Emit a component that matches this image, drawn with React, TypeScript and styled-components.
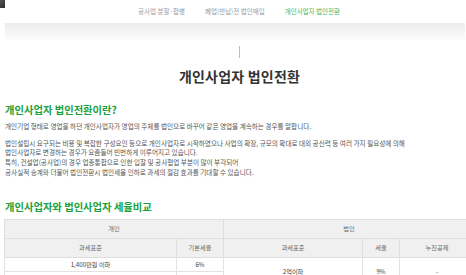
import React from "react";
import styled, { createGlobalStyle } from "styled-components";

const GlobalStyle = createGlobalStyle`
  html, body {
    margin: 0;
    padding: 0;
    background: #fff;
    overflow-x: hidden;
  }
  body {
    font-family: "Noto Sans CJK KR", "Noto Sans", sans-serif;
    color: #555;
  }
`;

const Page = styled.div`
  position: relative;
  width: 466px;
`;

const LogoCorner = styled.div`
  position: absolute;
  left: 0;
  top: 0;
  width: 5px;
  height: 8px;
  background: linear-gradient(135deg, #555 0%, #2d2d2d 100%);
`;

const Header = styled.header`
  height: 23px;
  display: flex;
  justify-content: center;
  align-items: center;
  gap: 20px;
  padding-left: 12px;
  background: #fff;
`;

const NavItem = styled.a<{ $active?: boolean }>`
  font-size: 6.5px;
  line-height: 1;
  color: ${(p) => (p.$active ? "#45b565" : "#9a9a9a")};
  text-decoration: none;
  white-space: nowrap;
`;

const Shade = styled.div`
  height: 17px;
  margin: 0 1px 0 5px;
  background: linear-gradient(#ebebeb, #fdfdfd);
`;

const Content = styled.main`
  width: 471px;
  margin-left: 4px;
  display: flex;
  flex-direction: column;
`;

const Divider = styled.span`
  align-self: center;
  width: 1px;
  height: 12px;
  margin-top: 6px;
  background: #bdbdbd;
`;

const Title = styled.h1`
  margin: 8px 0 0;
  text-align: center;
  font-size: 14px;
  line-height: 20px;
  font-weight: 700;
  color: #333;
  letter-spacing: 0.2px;
`;

const SectionTitle = styled.h2<{ $gap: number }>`
  margin: ${(p) => p.$gap}px 0 0 1px;
  font-size: 10.3px;
  line-height: 14px;
  font-weight: 700;
  color: #19a13c;
`;

const Paragraph = styled.p<{ $gap: number }>`
  margin: ${(p) => p.$gap}px 0 0 1px;
  font-size: 6.6px;
  line-height: 9.7px;
  color: #555;
`;

const Table = styled.table`
  width: 471px;
  margin-top: 5px;
  border-collapse: collapse;
  table-layout: fixed;
  border-top: 1px solid #cfcfcf;
`;

const HeadCell = styled.th`
  height: 18px;
  padding: 0;
  background: #f0f0f0;
  border: 1px solid #dedede;
  font-size: 6.2px;
  font-weight: 400;
  color: #666;
  text-align: center;
`;

const Cell = styled.td`
  height: 13px;
  padding: 0;
  border: 1px solid #e2e2e2;
  font-size: 6.2px;
  color: #444;
  text-align: center;
`;

const personalRows = [
  { base: "1,400만원 이하", rate: "6%" },
  { base: "1,400만원 초과 5,000만원 이하", rate: "15%" },
  { base: "5,000만원 초과 8,800만원 이하", rate: "24%" },
  { base: "8,800만원 초과 1억5천만원 이하", rate: "35%" },
];

export default function App() {
  return (
    <Page>
      <GlobalStyle />
      <LogoCorner />
      <Header>
        <NavItem href="#">공사업 분할·합병</NavItem>
        <NavItem href="#">폐업(반납)전 법인매입</NavItem>
        <NavItem href="#" $active>
          개인사업자 법인전환
        </NavItem>
      </Header>
      <Shade />
      <Content>
        <Divider />
        <Title>개인사업자 법인전환</Title>
        <SectionTitle $gap={17}>개인사업자 법인전환이란?</SectionTitle>
        <Paragraph $gap={5}>
          개인기업 형태로 영업을 하던 개인사업자가 영업의 주체를 법인으로 바꾸어 같은 영업을 계속하는 경우를 말합니다.
        </Paragraph>
        <Paragraph $gap={7}>
          법인설립시 요구되는 비용 및 복잡한 구성요인 등으로 개인사업자로 시작하였으나 사업의 확장, 규모의 확대로 대외 공신력 등 여러 가지 필요성에 의해
          <br />
          법인사업자로 변경하는 경우가 요즘들어 빈번하게 이루어지고 있습니다.
          <br />
          특히, 건설업(공사업)의 경우 업종통합으로 인한 입찰 및 공사협업 부분이 많이 부각되어
          <br />
          공사실적 승계와 더불어 법인전환시 법인세율 인하로 과세의 절감 효과를 기대할 수 있습니다.
        </Paragraph>
        <SectionTitle $gap={22}>개인사업자와 법인사업자 세율비교</SectionTitle>
        <Table>
          <colgroup>
            <col style={{ width: 172 }} />
            <col style={{ width: 47 }} />
            <col style={{ width: 139 }} />
            <col style={{ width: 37 }} />
            <col />
          </colgroup>
          <thead>
            <tr>
              <HeadCell colSpan={2}>개인</HeadCell>
              <HeadCell colSpan={3}>법인</HeadCell>
            </tr>
            <tr>
              <HeadCell>과세표준</HeadCell>
              <HeadCell>기본세율</HeadCell>
              <HeadCell>과세표준</HeadCell>
              <HeadCell>세율</HeadCell>
              <HeadCell>누진공제</HeadCell>
            </tr>
          </thead>
          <tbody>
            {personalRows.map((row, i) => (
              <tr key={row.base}>
                <Cell>{row.base}</Cell>
                <Cell>{row.rate}</Cell>
                {i === 0 && (
                  <>
                    <Cell rowSpan={2}>2억이하</Cell>
                    <Cell rowSpan={2}>9%</Cell>
                    <Cell rowSpan={2}>-</Cell>
                  </>
                )}
                {i === 2 && (
                  <>
                    <Cell rowSpan={2}>2억 초과 200억 이하</Cell>
                    <Cell rowSpan={2}>19%</Cell>
                    <Cell rowSpan={2}>2,000만원</Cell>
                  </>
                )}
              </tr>
            ))}
          </tbody>
        </Table>
      </Content>
    </Page>
  );
}
